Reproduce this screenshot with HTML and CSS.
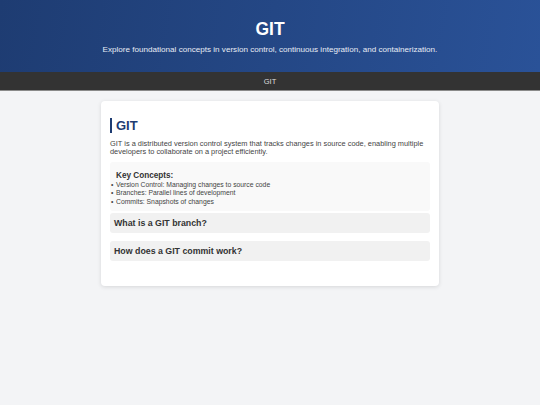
FILE: index.html
```html
<!DOCTYPE html>
<html lang="en">
<head>
<meta charset="utf-8">
<title>GIT</title>
<link rel="stylesheet" href="styles.css">
</head>
<body>
<header class="hero">
  <h1 class="hero-title">GIT</h1>
  <p class="hero-sub">Explore foundational concepts in version control, continuous integration, and containerization.</p>
</header>
<nav class="nav">
  <a class="nav-link" href="#">GIT</a>
</nav>
<main class="main">
  <section class="card">
    <h2 class="card-title">GIT</h2>
    <p class="card-text">GIT is a distributed version control system that tracks changes in source code, enabling multiple developers to collaborate on a project efficiently.</p>
    <div class="concepts">
      <h3 class="concepts-title">Key Concepts:</h3>
      <ul class="concepts-list">
        <li>Version Control: Managing changes to source code</li>
        <li>Branches: Parallel lines of development</li>
        <li>Commits: Snapshots of changes</li>
      </ul>
    </div>
    <div class="faq">
      <h3 class="faq-q">What is a GIT branch?</h3>
    </div>
    <div class="faq">
      <h3 class="faq-q">How does a GIT commit work?</h3>
    </div>
  </section>
</main>
</body>
</html>
```

FILE: styles.css
```css
* { box-sizing: border-box; }
html, body { margin: 0; padding: 0; }
body {
  font-family: "Liberation Sans", Arial, sans-serif;
  background: #f3f4f6;
  color: #333;
  min-height: 405px;
}
.hero {
  height: 72px;
  background: linear-gradient(100deg, #1e3c72 0%, #2a5298 100%);
  color: #fff;
  text-align: center;
  padding-top: 19px;
}
.hero-title {
  margin: 0;
  font-size: 17.5px;
  line-height: 20px;
  font-weight: bold;
}
.hero-sub {
  margin: 5px 0 0;
  font-size: 8.1px;
  line-height: 11px;
  color: #e8ecf5;
}
.nav {
  height: 19px;
  background: #333;
  border-bottom: 1px solid #8a8a8a;
  display: flex;
  align-items: center;
  justify-content: center;
}
.nav-link {
  color: #ddd;
  text-decoration: none;
  font-size: 7.5px;
}
.main {
  display: flex;
  justify-content: center;
  padding-top: 10px;
}
.card {
  width: 338px;
  background: #fff;
  border-radius: 4px;
  box-shadow: 0 1px 4px rgba(0,0,0,0.12);
  padding: 17px 9px 25px;
}
.card-title {
  margin: 0;
  font-size: 13px;
  line-height: 15px;
  color: #1e3c72;
  border-left: 2px solid #1e3c72;
  padding-left: 4px;
}
.card-text {
  margin: 7px 0 6px;
  font-size: 7.4px;
  line-height: 8px;
  color: #444;
}
.concepts {
  background: #f9f9f9;
  border-radius: 3px;
  padding: 9px 6px 5px 6px;
}
.concepts-title {
  margin: 0;
  font-size: 8.2px;
  line-height: 9px;
  color: #333;
}
.concepts-list {
  list-style: none;
  margin: 1px 0 0;
  padding: 0;
  font-size: 6.8px;
  line-height: 8.4px;
  color: #444;
}
.concepts-list li::before {
  content: "\2022";
  display: inline-block;
  width: 5px;
  margin-left: -5px;
}
.faq {
  background: #f1f1f1;
  border-radius: 3px;
  padding: 5px 4px;
  margin-bottom: 8px;
}
.faq + .faq { margin-bottom: 0; }
.faq-q {
  margin: 0;
  font-size: 8.8px;
  line-height: 10px;
  color: #333;
}
.concepts + .faq { margin-top: 2px; }
```
